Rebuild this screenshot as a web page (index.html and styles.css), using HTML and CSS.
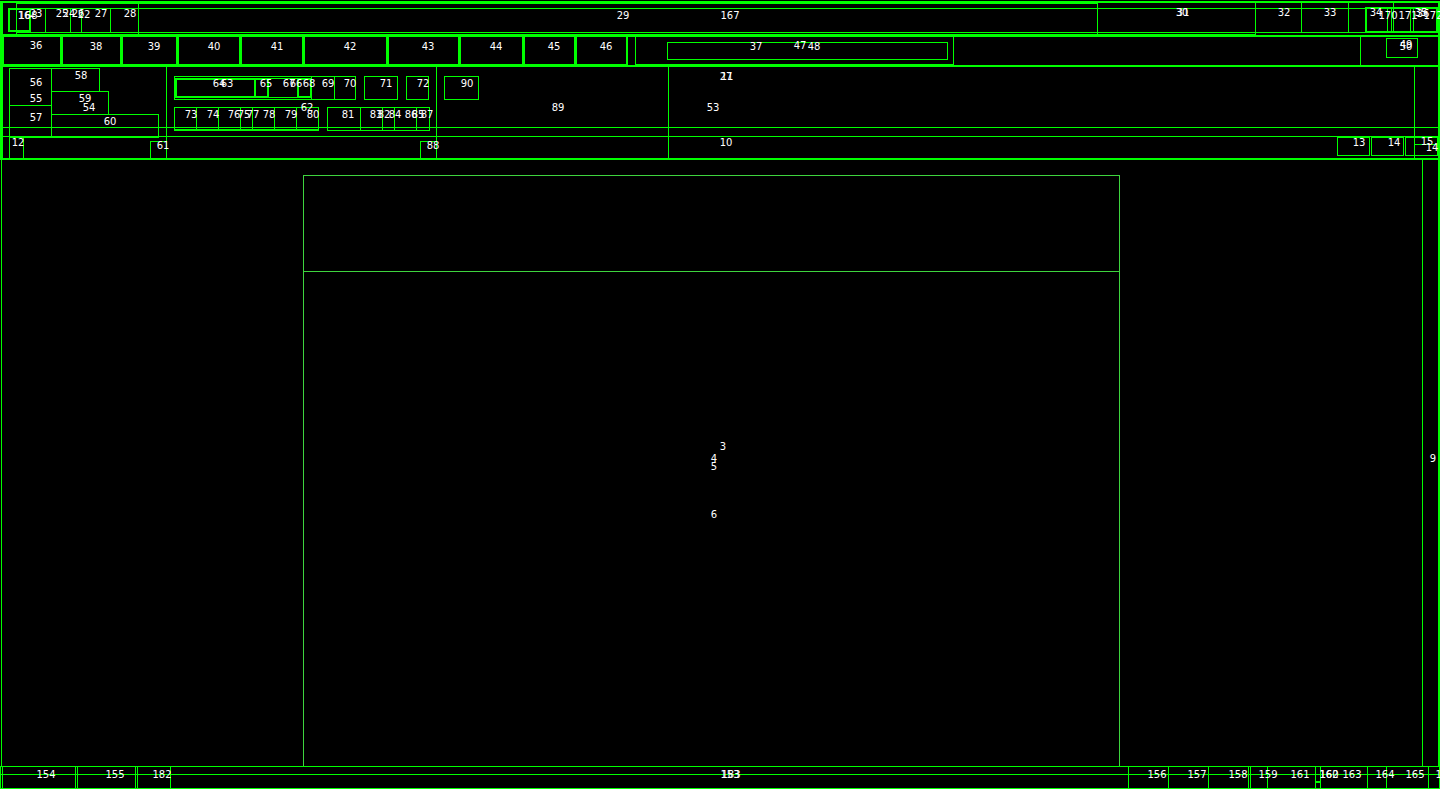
FILE: index.html
```html
<!DOCTYPE html>
<html lang="en">
<head>
<meta charset="utf-8">
<title>Layout boxes</title>
<link rel="stylesheet" href="styles.css">
</head>
<body>
<div class="canvas">
  <!-- row 1: title bar -->
  <div class="b g2" style="left:0;top:1px;width:1440px;height:36px"></div>
  <div class="b g" style="left:16px;top:3px;width:123px;height:32px"></div>
  <div class="b g" style="left:138px;top:3px;width:960px;height:32px"></div>
  <div class="b g" style="left:16px;top:8px;width:1424px;height:25px"></div>
  <div class="b g" style="left:2px;top:2px;width:15px;height:33px"></div>
  <div class="b g2" style="left:8px;top:8px;width:23px;height:24px"></div>
  <div class="b g" style="left:45px;top:8px;width:26px;height:25px"></div>
  <div class="b g" style="left:70px;top:8px;width:12px;height:25px"></div>
  <div class="b g" style="left:81px;top:8px;width:30px;height:25px"></div>
  <div class="b g" style="left:110px;top:8px;width:29px;height:25px"></div>
  <div class="b g" style="left:1097px;top:2px;width:159px;height:33px"></div>
  <div class="b g" style="left:1255px;top:2px;width:47px;height:31px"></div>
  <div class="b g" style="left:1301px;top:2px;width:48px;height:31px"></div>
  <div class="b g" style="left:1348px;top:2px;width:46px;height:31px"></div>
  <div class="b g" style="left:1393px;top:2px;width:47px;height:31px"></div>
  <div class="b g2" style="left:1365px;top:7px;width:73px;height:26px"></div>
  <div class="b g" style="left:1387px;top:7px;width:5px;height:26px"></div>
  <div class="b g" style="left:1410px;top:7px;width:4px;height:26px"></div>

  <!-- row 2: tabs -->
  <div class="b g2" style="left:0;top:35px;width:1440px;height:32px"></div>
  <div class="b g2" style="left:2px;top:35px;width:60px;height:31px"></div>
  <div class="b g2" style="left:61px;top:35px;width:61px;height:31px"></div>
  <div class="b g2" style="left:121px;top:35px;width:57px;height:31px"></div>
  <div class="b g2" style="left:177px;top:35px;width:64px;height:31px"></div>
  <div class="b g2" style="left:240px;top:35px;width:64px;height:31px"></div>
  <div class="b g2" style="left:303px;top:35px;width:85px;height:31px"></div>
  <div class="b g2" style="left:387px;top:35px;width:73px;height:31px"></div>
  <div class="b g2" style="left:459px;top:35px;width:65px;height:31px"></div>
  <div class="b g2" style="left:523px;top:35px;width:53px;height:31px"></div>
  <div class="b g2" style="left:575px;top:35px;width:53px;height:31px"></div>
  <div class="b g" style="left:627px;top:35px;width:9px;height:31px"></div>
  <div class="b g" style="left:635px;top:35px;width:319px;height:30px"></div>
  <div class="b g" style="left:667px;top:42px;width:281px;height:18px"></div>
  <div class="b g" style="left:953px;top:35px;width:408px;height:31px"></div>
  <div class="b g" style="left:1360px;top:35px;width:80px;height:31px"></div>
  <div class="b g" style="left:1386px;top:38px;width:32px;height:20px"></div>

  <!-- row 3: ribbon -->
  <div class="b g2" style="left:0;top:65px;width:1440px;height:95px"></div>
  <div class="b g" style="left:2px;top:66px;width:165px;height:93px"></div>
  <div class="b g" style="left:166px;top:66px;width:271px;height:93px"></div>
  <div class="b g" style="left:436px;top:66px;width:233px;height:93px"></div>
  <div class="b g" style="left:668px;top:66px;width:747px;height:93px"></div>
  <div class="b g" style="left:0;top:127px;width:1440px;height:10px"></div>
  <div class="b g" style="left:9px;top:68px;width:43px;height:38px"></div>
  <div class="b g" style="left:9px;top:105px;width:43px;height:33px"></div>
  <div class="b g" style="left:51px;top:68px;width:49px;height:24px"></div>
  <div class="b g" style="left:51px;top:91px;width:58px;height:24px"></div>
  <div class="b g" style="left:51px;top:114px;width:108px;height:24px"></div>
  <div class="b g" style="left:9px;top:136px;width:15px;height:23px"></div>
  <div class="b g" style="left:150px;top:141px;width:17px;height:18px"></div>
  <div class="b g" style="left:174px;top:76px;width:182px;height:24px"></div>
  <div class="b g2" style="left:175px;top:78px;width:81px;height:20px"></div>
  <div class="b g2" style="left:254px;top:78px;width:15px;height:20px"></div>
  <div class="b g" style="left:268px;top:78px;width:30px;height:20px"></div>
  <div class="b g2" style="left:297px;top:78px;width:15px;height:20px"></div>
  <div class="b g" style="left:311px;top:76px;width:24px;height:24px"></div>
  <div class="b g" style="left:334px;top:76px;width:22px;height:24px"></div>
  <div class="b g" style="left:364px;top:76px;width:34px;height:24px"></div>
  <div class="b g" style="left:406px;top:76px;width:23px;height:24px"></div>
  <div class="b g" style="left:174px;top:107px;width:23px;height:24px"></div>
  <div class="b g" style="left:196px;top:107px;width:23px;height:24px"></div>
  <div class="b g" style="left:218px;top:107px;width:23px;height:24px"></div>
  <div class="b g" style="left:240px;top:107px;width:13px;height:24px"></div>
  <div class="b g" style="left:252px;top:107px;width:23px;height:24px"></div>
  <div class="b g" style="left:274px;top:107px;width:23px;height:24px"></div>
  <div class="b g" style="left:296px;top:107px;width:23px;height:24px"></div>
  <div class="b g" style="left:174px;top:129px;width:145px;height:2px"></div>
  <div class="b g" style="left:327px;top:107px;width:34px;height:24px"></div>
  <div class="b g" style="left:360px;top:107px;width:23px;height:24px"></div>
  <div class="b g" style="left:382px;top:107px;width:13px;height:24px"></div>
  <div class="b g" style="left:394px;top:107px;width:23px;height:24px"></div>
  <div class="b g" style="left:416px;top:107px;width:14px;height:24px"></div>
  <div class="b g" style="left:420px;top:141px;width:17px;height:18px"></div>
  <div class="b g" style="left:444px;top:76px;width:35px;height:24px"></div>
  <div class="b g" style="left:1337px;top:137px;width:33px;height:19px"></div>
  <div class="b g" style="left:1371px;top:137px;width:33px;height:19px"></div>
  <div class="b g" style="left:1405px;top:137px;width:33px;height:19px"></div>
  <div class="b g" style="left:1414px;top:144px;width:24px;height:12px"></div>

  <!-- document area -->
  <div class="b g" style="left:1px;top:158px;width:1439px;height:609px"></div>
  <div class="b d" style="left:303px;top:175px;width:817px;height:592px"></div>
  <div class="b d" style="left:303px;top:175px;width:817px;height:97px"></div>
  <div class="b g" style="left:1422px;top:158px;width:17px;height:609px"></div>

  <!-- status bar -->
  <div class="b g" style="left:0;top:766px;width:1440px;height:23px"></div>
  <div class="b g" style="left:0;top:774px;width:1440px;height:15px"></div>
  <div class="b g" style="left:2px;top:766px;width:74px;height:23px"></div>
  <div class="b g" style="left:77px;top:766px;width:59px;height:23px"></div>
  <div class="b g" style="left:137px;top:766px;width:34px;height:23px"></div>
  <div class="b g" style="left:1128px;top:766px;width:41px;height:23px"></div>
  <div class="b g" style="left:1168px;top:766px;width:41px;height:23px"></div>
  <div class="b g" style="left:1208px;top:766px;width:41px;height:23px"></div>
  <div class="b g" style="left:1250px;top:766px;width:18px;height:23px"></div>
  <div class="b g" style="left:1267px;top:766px;width:49px;height:23px"></div>
  <div class="b g" style="left:1315px;top:774px;width:6px;height:15px"></div>
  <div class="b g" style="left:1315px;top:781px;width:6px;height:1px"></div>
  <div class="b g" style="left:1320px;top:766px;width:48px;height:23px"></div>
  <div class="b g" style="left:1367px;top:766px;width:20px;height:23px"></div>
  <div class="b g" style="left:1386px;top:766px;width:43px;height:23px"></div>
  <div class="b g" style="left:1428px;top:766px;width:12px;height:23px"></div>

  <!-- labels -->
  <span class="l" style="left:24px;top:16px">16</span>
  <span class="l" style="left:28px;top:16px">168</span>
  <span class="l" style="left:36px;top:14px">23</span>
  <span class="l" style="left:62px;top:14px">25</span>
  <span class="l" style="left:69px;top:14px">24</span>
  <span class="l" style="left:78px;top:14px">26</span>
  <span class="l" style="left:84px;top:15px">22</span>
  <span class="l" style="left:101px;top:14px">27</span>
  <span class="l" style="left:130px;top:14px">28</span>
  <span class="l" style="left:623px;top:16px">29</span>
  <span class="l" style="left:730px;top:16px">167</span>
  <span class="l" style="left:1182px;top:13px">30</span>
  <span class="l" style="left:1183px;top:13px">31</span>
  <span class="l" style="left:1284px;top:13px">32</span>
  <span class="l" style="left:1330px;top:13px">33</span>
  <span class="l" style="left:1376px;top:13px">34</span>
  <span class="l" style="left:1388px;top:16px">170</span>
  <span class="l" style="left:1408px;top:16px">171</span>
  <span class="l" style="left:1421px;top:13px">35</span>
  <span class="l" style="left:1423px;top:14px">36</span>
  <span class="l" style="left:1433px;top:16px">172</span>

  <span class="l" style="left:36px;top:46px">36</span>
  <span class="l" style="left:96px;top:47px">38</span>
  <span class="l" style="left:154px;top:47px">39</span>
  <span class="l" style="left:214px;top:47px">40</span>
  <span class="l" style="left:277px;top:47px">41</span>
  <span class="l" style="left:350px;top:47px">42</span>
  <span class="l" style="left:428px;top:47px">43</span>
  <span class="l" style="left:496px;top:47px">44</span>
  <span class="l" style="left:554px;top:47px">45</span>
  <span class="l" style="left:606px;top:47px">46</span>
  <span class="l" style="left:756px;top:47px">37</span>
  <span class="l" style="left:800px;top:46px">47</span>
  <span class="l" style="left:814px;top:47px">48</span>
  <span class="l" style="left:1406px;top:45px">49</span>
  <span class="l" style="left:1406px;top:47px">50</span>

  <span class="l" style="left:36px;top:83px">56</span>
  <span class="l" style="left:81px;top:76px">58</span>
  <span class="l" style="left:36px;top:99px">55</span>
  <span class="l" style="left:85px;top:99px">59</span>
  <span class="l" style="left:89px;top:108px">54</span>
  <span class="l" style="left:36px;top:118px">57</span>
  <span class="l" style="left:110px;top:122px">60</span>
  <span class="l" style="left:18px;top:143px">12</span>
  <span class="l" style="left:163px;top:146px">61</span>
  <span class="l" style="left:219px;top:84px">64</span>
  <span class="l" style="left:227px;top:84px">63</span>
  <span class="l" style="left:266px;top:84px">65</span>
  <span class="l" style="left:289px;top:84px">67</span>
  <span class="l" style="left:296px;top:84px">66</span>
  <span class="l" style="left:309px;top:84px">68</span>
  <span class="l" style="left:328px;top:84px">69</span>
  <span class="l" style="left:350px;top:84px">70</span>
  <span class="l" style="left:386px;top:84px">71</span>
  <span class="l" style="left:423px;top:84px">72</span>
  <span class="l" style="left:467px;top:84px">90</span>
  <span class="l" style="left:307px;top:108px">62</span>
  <span class="l" style="left:191px;top:115px">73</span>
  <span class="l" style="left:213px;top:115px">74</span>
  <span class="l" style="left:234px;top:115px">76</span>
  <span class="l" style="left:244px;top:115px">75</span>
  <span class="l" style="left:253px;top:115px">77</span>
  <span class="l" style="left:269px;top:115px">78</span>
  <span class="l" style="left:291px;top:115px">79</span>
  <span class="l" style="left:313px;top:115px">80</span>
  <span class="l" style="left:348px;top:115px">81</span>
  <span class="l" style="left:376px;top:115px">83</span>
  <span class="l" style="left:384px;top:115px">82</span>
  <span class="l" style="left:395px;top:115px">84</span>
  <span class="l" style="left:411px;top:115px">86</span>
  <span class="l" style="left:418px;top:115px">85</span>
  <span class="l" style="left:427px;top:115px">87</span>
  <span class="l" style="left:433px;top:146px">88</span>
  <span class="l" style="left:558px;top:108px">89</span>
  <span class="l" style="left:726px;top:77px">27</span>
  <span class="l" style="left:727px;top:77px">11</span>
  <span class="l" style="left:713px;top:108px">53</span>
  <span class="l" style="left:726px;top:143px">10</span>
  <span class="l" style="left:1359px;top:143px">13</span>
  <span class="l" style="left:1394px;top:143px">14</span>
  <span class="l" style="left:1427px;top:142px">15</span>
  <span class="l" style="left:1432px;top:148px">14</span>

  <span class="l" style="left:723px;top:447px">3</span>
  <span class="l" style="left:714px;top:459px">4</span>
  <span class="l" style="left:714px;top:467px">5</span>
  <span class="l" style="left:714px;top:515px">6</span>
  <span class="l" style="left:1433px;top:459px">9</span>

  <span class="l" style="left:46px;top:775px">154</span>
  <span class="l" style="left:115px;top:775px">155</span>
  <span class="l" style="left:162px;top:775px">182</span>
  <span class="l" style="left:730px;top:775px">153</span>
  <span class="l" style="left:731px;top:775px">183</span>
  <span class="l" style="left:1157px;top:775px">156</span>
  <span class="l" style="left:1197px;top:775px">157</span>
  <span class="l" style="left:1238px;top:775px">158</span>
  <span class="l" style="left:1268px;top:775px">159</span>
  <span class="l" style="left:1300px;top:775px">161</span>
  <span class="l" style="left:1329px;top:775px">160</span>
  <span class="l" style="left:1329px;top:775px">162</span>
  <span class="l" style="left:1352px;top:775px">163</span>
  <span class="l" style="left:1385px;top:775px">164</span>
  <span class="l" style="left:1415px;top:775px">165</span>
  <span class="l" style="left:1445px;top:775px">166</span>
</div>
</body>
</html>
```

FILE: styles.css
```css
html, body {
  margin: 0;
  padding: 0;
  background: #000;
  overflow: hidden;
}

.canvas {
  position: relative;
  width: 1440px;
  height: 789px;
  background: #000;
  overflow: hidden;
  font-family: "DejaVu Sans", "Liberation Sans", sans-serif;
}

.b {
  position: absolute;
  box-sizing: border-box;
}

.g {
  border: 1px solid #00ff00;
}

.g2 {
  border: 2px solid #00ff00;
}

.d {
  border: 1px solid #3ed43e;
}

.l {
  position: absolute;
  transform: translate(-50%, -50%);
  color: #ffffff;
  font-size: 10px;
  line-height: 10px;
  white-space: nowrap;
}
```
